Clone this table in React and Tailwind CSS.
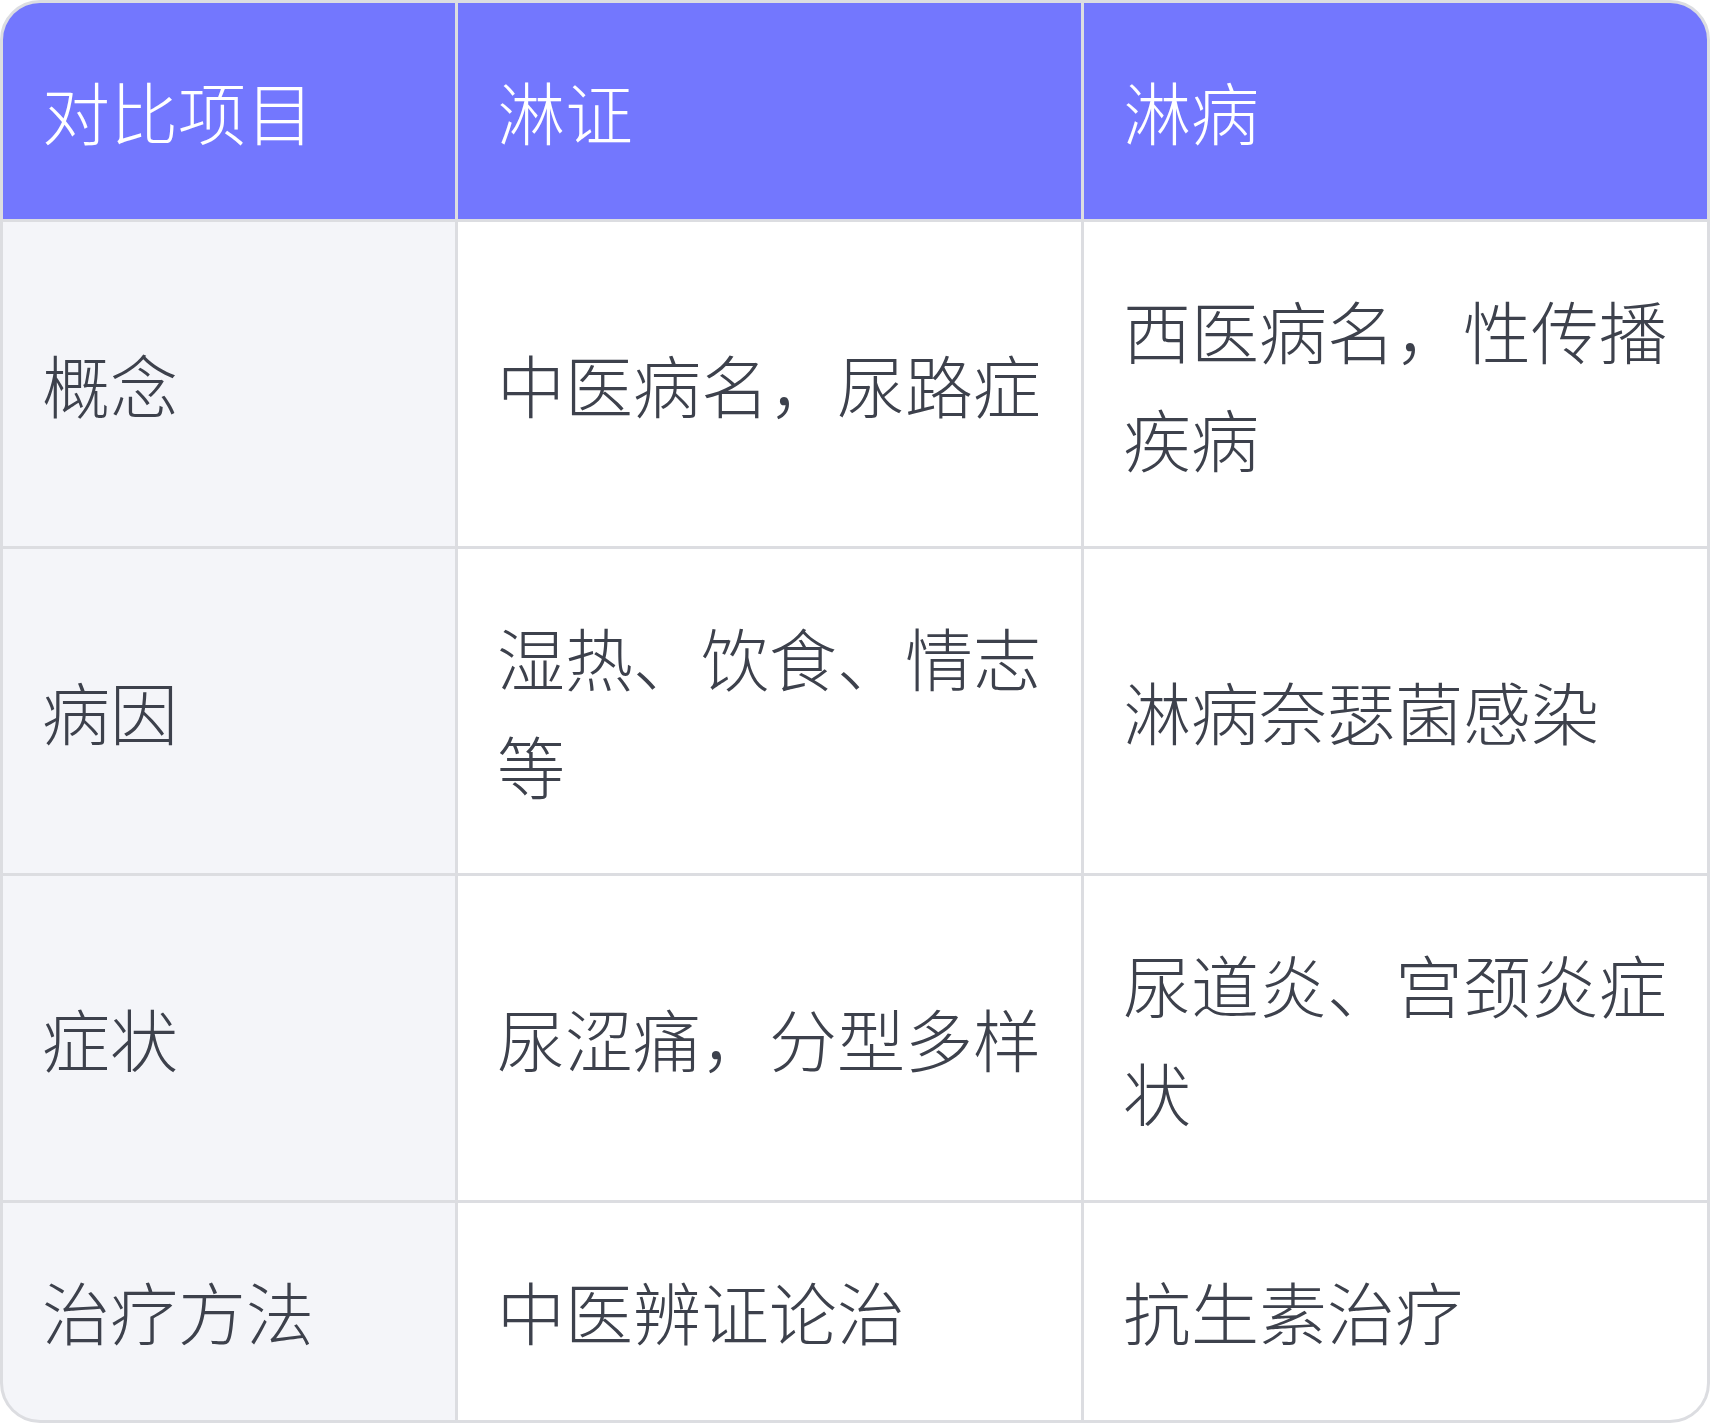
const HEAD = ["对比项目", "淋证", "淋病"];

const ROWS = [
  ["概念", "中医病名，尿路症", "西医病名，性传播疾病"],
  ["病因", "湿热、饮食、情志等", "淋病奈瑟菌感染"],
  ["症状", "尿涩痛，分型多样", "尿道炎、宫颈炎症状"],
  ["治疗方法", "中医辨证论治", "抗生素治疗"],
];

const FONT = {
  fontFamily: '"Noto Sans CJK SC", "Noto Sans", sans-serif',
};

export default function App() {
  return (
    <div className="w-[1710px] bg-white" style={FONT}>
      <div className="grid grid-cols-[452px_623px_623px] gap-[3px] overflow-hidden rounded-[40px] border-[3px] border-[#dcdde1] bg-[#dcdde1] text-[68px] font-light leading-[108px]">
        {HEAD.map((h) => (
          <div key={h} className="flex items-center bg-[#7377fe] pl-[39px] pr-[34px] py-[54px] text-white">
            {h}
          </div>
        ))}

        {ROWS.map((row, r) =>
          row.map((cell, i) => (
            <div
              key={row[0] + i}
              className={
                (i === 0 ? "bg-[#f4f5f9] " : "bg-white ") +
                (r === ROWS.length - 1 ? "pb-[55px] " : "pb-[54px] ") +
                "flex items-center pl-[39px] pr-[34px] pt-[54px] text-[#3d414c]"
              }
            >
              {cell}
            </div>
          ))
        )}
      </div>
    </div>
  );
}
